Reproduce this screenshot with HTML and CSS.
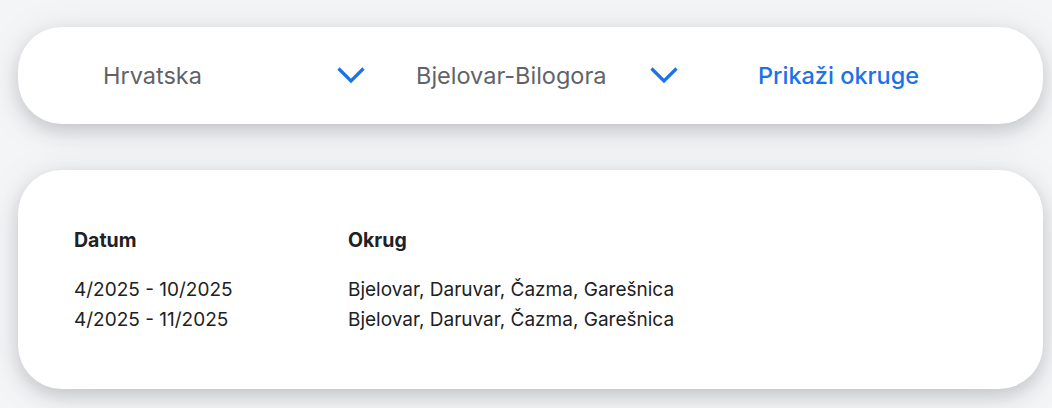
FILE: index.html
```html
<!DOCTYPE html>
<html lang="hr">
<head>
    <meta charset="UTF-8">
    <meta name="viewport" content="width=device-width, initial-scale=1.0">
    <title>Okruzi</title>
    <link rel="stylesheet" href="styles.css">
</head>
<body>
    <div class="card filters">
        <div class="select">
            <span class="select-text">Hrvatska</span>
            <svg class="chevron" viewBox="0 0 28 17"><polyline points="1.5,1.5 14,14 26.5,1.5"></polyline></svg>
        </div>
        <div class="select">
            <span class="select-text">Bjelovar-Bilogora</span>
            <svg class="chevron" viewBox="0 0 28 17"><polyline points="1.5,1.5 14,14 26.5,1.5"></polyline></svg>
        </div>
        <button class="show-btn">Prikaži okruge</button>
    </div>
    <div class="card results">
        <div class="grid">
            <div class="head">Datum</div>
            <div class="head">Okrug</div>
            <div class="cell">4/2025 - 10/2025</div>
            <div class="cell">Bjelovar, Daruvar, Čazma, Garešnica</div>
            <div class="cell">4/2025 - 11/2025</div>
            <div class="cell">Bjelovar, Daruvar, Čazma, Garešnica</div>
        </div>
    </div>
</body>
</html>
```

FILE: styles.css
```css
body {
    margin: 0;
    padding: 27px 9px 0 18px;
    background-color: #f4f5f7;
    font-family: Inter, Roboto, "Liberation Sans", sans-serif;
    height: 408px;
    box-sizing: border-box;
    overflow: hidden;
}
.card {
    background-color: #fff;
    border-radius: 44px;
    box-shadow: 0 7px 18px rgba(60, 64, 67, 0.22), 0 4px 40px rgba(60, 64, 67, 0.08);
}
.filters {
    height: 97px;
    display: flex;
    align-items: center;
    padding-left: 85px;
}
.select {
    width: 313px;
    display: flex;
    align-items: center;
}
.select-text {
    width: 234px;
    font-size: 23.5px;
    color: #5f6368;
}
.chevron {
    width: 28px;
    height: 17px;
}
.chevron polyline {
    fill: none;
    stroke: #1a73e8;
    stroke-width: 3.2;
}
.show-btn {
    margin-left: 29px;
    padding: 0;
    border: none;
    background: none;
    font-family: inherit;
    font-size: 23.5px;
    font-weight: 500;
    color: #1a73e8;
    cursor: pointer;
}
.results {
    margin-top: 46px;
    height: 219px;
    box-sizing: border-box;
    padding: 56px;
}
.grid {
    display: grid;
    grid-template-columns: 274px 1fr;
    color: #202124;
}
.head {
    font-size: 19.5px;
    font-weight: 700;
    line-height: 28px;
    margin-bottom: 21px;
}
.cell {
    font-size: 19px;
    line-height: 30px;
}
```
